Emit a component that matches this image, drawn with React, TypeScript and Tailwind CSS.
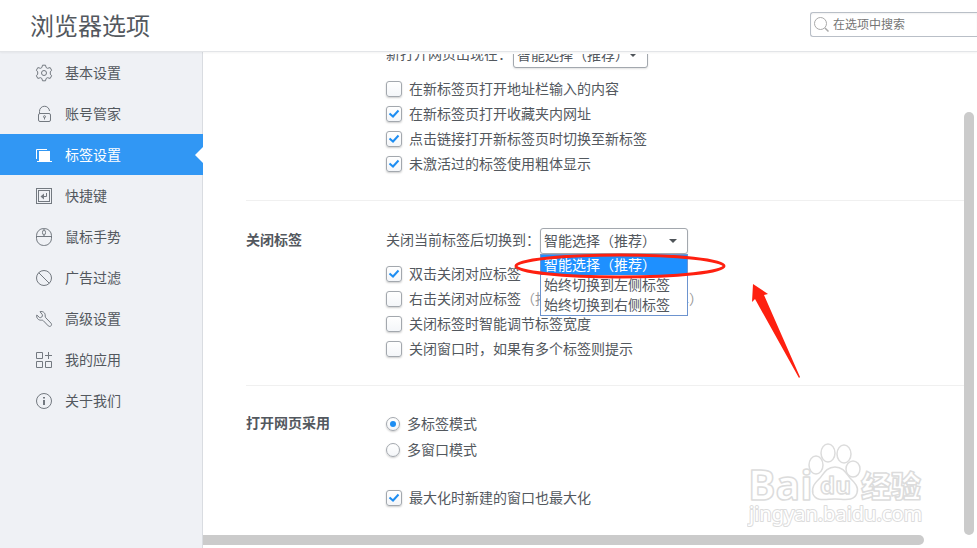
import type { ReactNode } from "react";

type NavItem = { label: string; icon: ReactNode; active?: boolean };

function Icon({ children }: { children: ReactNode }) {
  return (
    <svg
      width="18"
      height="18"
      viewBox="0 0 18 18"
      fill="none"
      stroke="currentColor"
      strokeWidth="1"
      aria-hidden="true"
      className="shrink-0"
    >
      {children}
    </svg>
  );
}

const navItems: NavItem[] = [
  {
    label: "基本设置",
    icon: (
      <Icon>
        <path
          d="M7.5 1.2h3l.6 2.3 1.3.8 2.8-.7 1.4 2.600-1.300 1.700v2.200l1.300 1.700-1.400 2.600-2.800-.7-1.300.8-.6 2.300h-3l-.6-2.300-1.300-.8-2.800.7-1.400-2.600 1.300-1.700V7.900l-1.300-1.700 1.400-2.600 2.800.7 1.300-.8z"
          strokeLinejoin="round"
        />
        <circle cx="9" cy="9" r="2.500" />
      </Icon>
    ),
  },
  {
    label: "账号管家",
    icon: (
      <Icon>
        <rect x="3.500" y="8.500" width="12" height="8" rx="1.500" />
        <path d="M4.500 8.500V6.500a5 5 0 0 1 10-.5" />
        <circle cx="9.500" cy="11.700" r="1" />
        <path d="M9.500 12.500v2" />
      </Icon>
    ),
  },
  {
    label: "标签设置",
    active: true,
    icon: (
      <Icon>
        <path d="M1.500 13V3.500H12" />
        <path d="M4 5h11v10h2v1H2v-1h2z" fill="currentColor" stroke="none" />
      </Icon>
    ),
  },
  {
    label: "快捷键",
    icon: (
      <Icon>
        <rect x="1.500" y="1.500" width="15" height="15" />
        <rect x="3.500" y="3.500" width="11" height="11" />
        <path d="M11.500 6v3.500H7" />
        <path d="M5.500 9.500l3.500-3v6z" fill="currentColor" stroke="none" />
      </Icon>
    ),
  },
  {
    label: "鼠标手势",
    icon: (
      <Icon>
        <rect x="1.500" y=".5" width="15" height="17" rx="7.200" />
        <path d="M1.500 8.500h15M9 .5V2M9 7v1.500" />
        <ellipse cx="9" cy="4.500" rx="1.500" ry="2.500" />
      </Icon>
    ),
  },
  {
    label: "广告过滤",
    icon: (
      <Icon>
        <circle cx="9" cy="9" r="7.500" />
        <path d="M3.700 3.700l10.600 10.600" />
      </Icon>
    ),
  },
  {
    label: "高级设置",
    icon: (
      <Icon>
        <path
          d="M5 1.700c2.500-.8 5.500.8 5.200 4.300-.1.800.1 1.300.6 1.800l5.200 5.400c1.700 2-.9 4.300-2.700 2.700L8.300 10.700c-.5-.5-1-.6-1.700-.5-3.500.3-5.500-2.500-4.800-5.200l2.700 2.500c1.500.8 3.600-1.100 2.800-2.900z"
          strokeLinejoin="round"
        />
      </Icon>
    ),
  },
  {
    label: "我的应用",
    icon: (
      <Icon>
        <path d="M1.500 1.500h6v6h-6zM1.500 10.500h6v6h-6zM10.500 10.500h6v6h-6zM13.500 1v7M10 4.500h7" />
      </Icon>
    ),
  },
  {
    label: "关于我们",
    icon: (
      <Icon>
        <circle cx="9" cy="9" r="7.500" />
        <path d="M8 5h2v1.500H8zM8 8h2v5H8z" fill="currentColor" stroke="none" />
      </Icon>
    ),
  },
];

function CheckRow({ id, checked, children }: { id: string; checked?: boolean; children: ReactNode }) {
  return (
    <div className="flex h-[25px] items-center gap-[7px]">
      <span className="grid size-4 shrink-0">
        <input
          id={id}
          type="checkbox"
          defaultChecked={checked}
          className="peer col-start-1 row-start-1 size-4 appearance-none rounded-[3px] border border-[#a3a8ae] bg-linear-to-b from-white to-[#f4f6f9] shadow-[0_1px_2px_rgba(0,0,0,0.2)]"
        />
        <svg
          viewBox="0 0 16 16"
          fill="none"
          stroke="#1d8df2"
          strokeWidth="2"
          aria-hidden="true"
          className="pointer-events-none invisible col-start-1 row-start-1 size-4 peer-checked:visible"
        >
          <path d="M3.500 7.500L7 10.500l5.500-6" />
        </svg>
      </span>
      <label htmlFor={id} className="whitespace-nowrap">
        {children}
      </label>
    </div>
  );
}

function RadioRow({ id, checked, children }: { id: string; checked?: boolean; children: ReactNode }) {
  return (
    <div className="flex h-[26px] items-center gap-[7px]">
      <span className="grid size-[14px] shrink-0 place-items-center">
        <input
          id={id}
          type="radio"
          name="open-mode"
          defaultChecked={checked}
          className="peer col-start-1 row-start-1 size-[14px] appearance-none rounded-full border border-[#a3a8ae] bg-linear-to-b from-white to-[#f4f6f9] shadow-[0_1px_2px_rgba(0,0,0,0.2)]"
        />
        <span className="pointer-events-none invisible col-start-1 row-start-1 size-[6px] rounded-full bg-[#1d8df2] peer-checked:visible" />
      </span>
      <label htmlFor={id}>{children}</label>
    </div>
  );
}

function SelectBox({ id, options, wide }: { id: string; options: string[]; wide?: boolean }) {
  return (
    <span className={wide ? "grid w-[148px] items-center" : "grid w-[135px] items-center"}>
      <select
        id={id}
        className="col-start-1 row-start-1 h-[26px] w-full appearance-none rounded-[3px] border border-[#a3a8ae] bg-white pl-[3px] shadow-[0_1px_2px_rgba(0,0,0,0.12)]"
      >
        {options.map((option) => (
          <option key={option}>{option}</option>
        ))}
      </select>
      <svg
        width="8"
        height="4"
        viewBox="0 0 8 4"
        fill="#4f5459"
        aria-hidden="true"
        className="pointer-events-none col-start-1 row-start-1 mr-[11px] justify-self-end"
      >
        <path d="M0 0h8L4 4z" />
      </svg>
    </span>
  );
}

function Section({ title, children }: { title?: string; children: ReactNode }) {
  return (
    <section className="flex border-b border-[#f0f0f0] pt-[27px] pb-6 last:border-0 last:pt-[25px]">
      <h2 className="w-[140px] shrink-0 leading-6 font-bold">{title}</h2>
      <div className="min-w-0 grow">{children}</div>
    </section>
  );
}

function Watermark() {
  return (
    <svg
      width="180"
      height="90"
      viewBox="0 0 180 90"
      fill="#ffffff"
      stroke="#dcdcdc"
      strokeWidth="1.500"
      strokeLinejoin="round"
      aria-hidden="true"
      className="pointer-events-none absolute right-[50px] bottom-[16px]"
    >
      <ellipse cx="69" cy="23" rx="7" ry="9" />
      <ellipse cx="81" cy="11" rx="7" ry="9" />
      <ellipse cx="97" cy="12" rx="7" ry="9" />
      <ellipse cx="106" cy="27" rx="7" ry="8" />
      <path d="M88 25c8 0 11 6 15 11 5 5 9 9 7 15-3 9-13 6-22 6s-19 3-22-5c-2-7 2-11 7-16 4-5 7-11 15-11z" />
      <text x="1" y="58" fontSize="41" fontWeight="700" className="font-['Open_Sans',sans-serif]">
        Bai
      </text>
      <text x="73" y="52" fontSize="24" fontWeight="700" className="font-['Open_Sans',sans-serif]">
        du
      </text>
      <text x="114" y="55" fontSize="30" fontWeight="900" className="font-['Noto_Sans_CJK_SC',sans-serif]">
        经验
      </text>
      <text x="2" y="79" fontSize="20" strokeWidth="2" className="font-['Noto_Sans',sans-serif] [paint-order:stroke]">
        jingyan.baidu.com
      </text>
    </svg>
  );
}

const closeOptions = ["智能选择（推荐）", "始终切换到左侧标签", "始终切换到右侧标签"];

export default function App() {
  return (
    <div className="relative flex h-screen flex-col overflow-hidden bg-white font-['Liberation_Sans','Noto_Sans_CJK_SC',sans-serif] text-[14px] leading-5 text-[#53585e]">
      <header className="z-10 flex h-[52px] shrink-0 items-center justify-between border-b border-[#e3e5e8] bg-white pl-[30px] shadow-[0_1px_2px_rgba(0,0,0,0.05)]">
        <h1 className="pt-[3px] text-[24px] leading-8">浏览器选项</h1>
        <label className="mb-[2px] flex h-[25px] w-[167px] items-center gap-1 rounded-l-[3px] border border-r-0 border-[#b9bfc7] pl-[3px] shadow-[inset_0_1px_2px_rgba(0,0,0,0.06)]">
          <svg
            width="15"
            height="15"
            viewBox="0 0 15 15"
            fill="none"
            stroke="#a9a9a9"
            aria-hidden="true"
            className="shrink-0"
          >
            <circle cx="6.500" cy="6.500" r="6" />
            <path d="M11 11l3.500 3.500" strokeWidth="1.500" />
          </svg>
          <input
            type="text"
            aria-label="在选项中搜索"
            placeholder="在选项中搜索"
            className="w-full min-w-0 bg-transparent text-[12px] leading-5 outline-none placeholder:text-[#757575]"
          />
        </label>
      </header>

      <div className="flex min-h-0 grow">
        <nav className="w-[203px] shrink-0 bg-[#eff1f5] shadow-[inset_-1px_0_0_#d9dce1]">
          <ul>
            {navItems.map((item) => (
              <li key={item.label}>
                <a
                  href="#"
                  aria-current={item.active ? "page" : undefined}
                  className={
                    item.active
                      ? "flex h-[41px] items-center gap-3 bg-[#3197f4] pl-[35px] text-white"
                      : "flex h-[41px] items-center gap-3 pl-[35px] text-[#53585e]"
                  }
                >
                  <span className={item.active ? "text-white" : "text-[#737980]"}>{item.icon}</span>
                  {item.label}
                  {item.active && (
                    <svg width="8" height="16" viewBox="0 0 8 16" fill="#ffffff" aria-hidden="true" className="ml-auto">
                      <path d="M8 0v16L0 8z" />
                    </svg>
                  )}
                </a>
              </li>
            ))}
          </ul>
        </nav>

        <div className="flex min-w-0 grow flex-col pt-[2px]">
          <div className="flex min-h-0 grow">
            <main className="min-w-0 grow overflow-hidden pl-[43px]">
              <div className="-mt-[39px]">
                <Section>
                  <div className="mb-2 flex items-center">
                    <label htmlFor="new-page" className="w-[127px] pb-[2px] whitespace-nowrap">
                      新打开网页出现在：
                    </label>
                    <SelectBox id="new-page" options={["智能选择（推荐）"]} />
                  </div>
                  <CheckRow id="address">在新标签页打开地址栏输入的内容</CheckRow>
                  <CheckRow id="favorites" checked>
                    在新标签页打开收藏夹内网址
                  </CheckRow>
                  <CheckRow id="links" checked>
                    点击链接打开新标签页时切换至新标签
                  </CheckRow>
                  <CheckRow id="bold" checked>
                    未激活过的标签使用粗体显示
                  </CheckRow>
                </Section>

                <Section title="关闭标签">
                  <div className="mb-[7px] flex items-center">
                    <label htmlFor="after-close" className="w-[154px] pb-[2px] whitespace-nowrap">
                      关闭当前标签后切换到：
                    </label>
                    <div className="relative">
                      <SelectBox id="after-close" options={closeOptions} wide />
                      <ul
                        role="listbox"
                        aria-label="关闭当前标签后切换到"
                        className="absolute top-full left-0 z-10 w-full border border-[#6d94cf] bg-white"
                      >
                        {closeOptions.map((option, index) => (
                          <li
                            key={option}
                            role="option"
                            aria-selected={index === 0}
                            className="h-5 pl-[3px] whitespace-nowrap aria-selected:bg-[#1e90ff] aria-selected:text-white"
                          >
                            {option}
                          </li>
                        ))}
                      </ul>
                      <svg
                        width="300"
                        height="160"
                        viewBox="0 0 300 160"
                        aria-hidden="true"
                        className="pointer-events-none absolute top-[22px] -left-[26px] z-20 max-w-none"
                      >
                        <ellipse cx="106" cy="16" rx="104" ry="11" fill="none" stroke="#fe2010" strokeWidth="3" />
                        <path d="M239 34l15 10-4 1 36 82-1 1-44-79-3 3z" fill="#fe2010" />
                      </svg>
                    </div>
                  </div>
                  <CheckRow id="double-click" checked>
                    双击关闭对应标签
                  </CheckRow>
                  <CheckRow id="right-click">
                    右击关闭对应标签<span className="text-[#999999]">（按住Shift键显示右键菜单）</span>
                  </CheckRow>
                  <CheckRow id="tab-width">关闭标签时智能调节标签宽度</CheckRow>
                  <CheckRow id="window-close">关闭窗口时，如果有多个标签则提示</CheckRow>
                </Section>

                <Section title="打开网页采用">
                  <div className="mb-[22px]">
                    <RadioRow id="multi-tab" checked>
                      多标签模式
                    </RadioRow>
                    <RadioRow id="multi-window">多窗口模式</RadioRow>
                  </div>
                  <CheckRow id="maximize" checked>
                    最大化时新建的窗口也最大化
                  </CheckRow>
                </Section>
              </div>
            </main>
            <div className="w-[13px] shrink-0 pt-[58px]">
              <div className="h-full w-[10px] rounded-full bg-[#cbcbcb]" />
            </div>
          </div>
          <div className="shrink-0 pr-[53px] pb-[3px]">
            <div className="h-[10px] rounded-r-full bg-[#cbcbcb]" />
          </div>
        </div>
      </div>
      <Watermark />
    </div>
  );
}
